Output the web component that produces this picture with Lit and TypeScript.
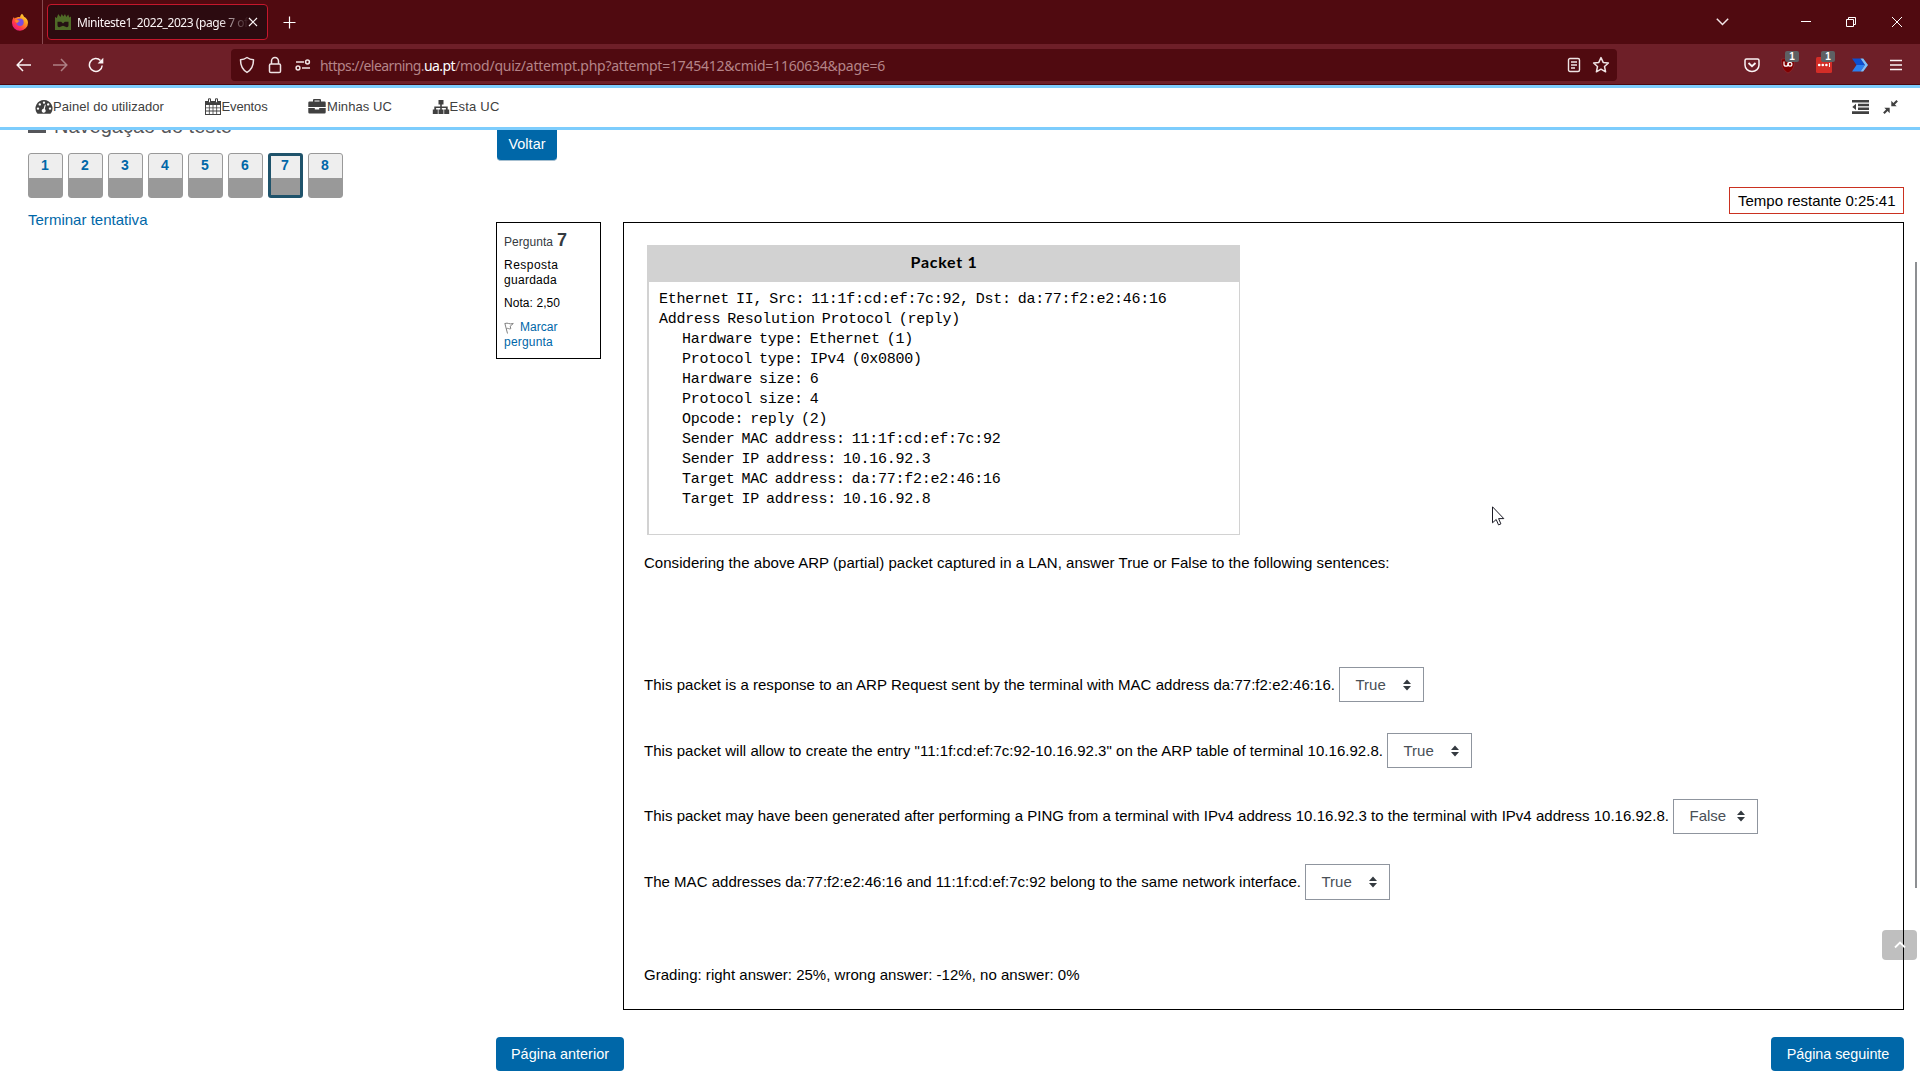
import { LitElement, html, svg, css } from "lit";
import { customElement, property } from "lit/decorators.js";
import { classMap } from "lit/directives/class-map.js";

/** A run of text tracked out (or in) so that it fills a given width. */
@customElement("fit-text")
class FitText extends LitElement {
  static styles = css`
    :host { display: inline-block; white-space: pre; }
  `;
  @property() text = "";
  @property({ type: Number }) w = 0;

  render() {
    return html`<span>${this.text}</span>`;
  }

  updated() {
    const span = this.renderRoot.querySelector("span") as HTMLElement;
    span.style.letterSpacing = "0px";
    const natural = span.getBoundingClientRect().width;
    span.style.letterSpacing = `${(this.w - natural) / this.text.length}px`;
  }
}

@customElement("browser-chrome")
class BrowserChrome extends LitElement {
  static styles = css`
    :host { display: block; height: 85px; font-family: "Noto Sans", "Open Sans", sans-serif; color: #fbf4f5; }
    svg { display: block; flex: none; }
    .tabs { display: flex; height: 44px; align-items: center; background: #500a10; }
    .pin { display: flex; width: 42px; justify-content: center; padding-right: 2px; box-sizing: border-box; }
    .sep { width: 1px; height: 44px; background: #884a50; }
    .tab { display: flex; align-items: center; box-sizing: border-box; width: 221px; height: 36px; margin-left: 4px;
      padding: 0 9px 0 7px; background: #2c0b10; border: 1px solid #c5172c; border-radius: 4px; }
    .title { flex: 1; margin-left: 6px; overflow: hidden; font-size: 12px; line-height: 18px; height: 18px; white-space: nowrap; padding-top: 1px;
      -webkit-mask-image: linear-gradient(90deg, #000 142px, transparent 172px); mask-image: linear-gradient(90deg, #000 142px, transparent 172px); }
    .plus { margin-left: 15px; }
    .win { display: flex; margin-left: auto; align-items: center; padding-right: 17px; }
    .win svg:nth-child(2) { margin-left: 72px; }
    .win svg:nth-child(3) { margin-left: 34px; }
    .win svg:nth-child(4) { margin-left: 34px; }
    .bar { display: flex; box-sizing: border-box; height: 41px; padding-top: 1px; align-items: center; background: #6e1f28; border-bottom: 1px solid #4b0a12; }
    .back { margin-left: 16px; }
    .fwd { margin-left: 20px; opacity: .45; }
    .reload { margin-left: 20px; }
    .url { display: flex; align-items: center; box-sizing: border-box; width: 1386px; height: 32px; margin-left: 127px;
      padding: 0 7px 0 7px; background: #500a10; border-radius: 4px; color: #b58488; }
    .ident { display: flex; gap: 10px; }
    .addr { display: flex; margin-left: 8px; padding-top: 2px; font-size: 14px; line-height: 20px; }
    .host { color: #fff; }
    .grow { flex: 1; }
    .star { margin-left: 11px; }
    .ext { display: flex; align-items: center; margin-left: 126px; }
    .slot { position: relative; width: 18px; height: 18px; margin-right: 18px; }
    .slot:last-child { margin-right: 0; }
    .badge { position: absolute; left: 6px; top: -5px; width: 14px; height: 11px; border-radius: 2px; background: #5e6063;
      font: bold 10px/11px "Liberation Sans", sans-serif; text-align: center; color: #fff; }
  `;

  render() {
    return html`
      <div class="tabs">
        <div class="pin">
          <svg width="18" height="18" viewBox="0 0 18 18">
            <defs>
              <linearGradient id="fx" x1="1" y1="0" x2="0.2" y2="1">
                <stop offset="0" stop-color="#fff04a" /><stop offset=".4" stop-color="#ff9a1f" />
                <stop offset=".72" stop-color="#ff3b47" /><stop offset="1" stop-color="#e8118a" />
              </linearGradient>
            </defs>
            <path fill="url(#fx)" d="M11 .8c1 1 1.700 1.900 2 2.900 2.400 1.200 4 3.300 4 6A8 8 0 0 1 1 9.800C1 7 1.800 5.300 3 3.900l.4 1.600c.8-.8 1.700-1.100 2.600-1.100C7 3.800 8 3.900 9 4.200 9.200 2.800 10 1.600 11 .8z" />
            <circle cx="9" cy="9.300" r="3.700" fill="#7a4be0" />
            <path fill="#ff8a26" d="M4 7.600c1.500-.8 3.300-.6 4.800.6-1.200 0-2.100.7-2.300 1.900-1.400-.2-2.300-1.200-2.500-2.500z" />
          </svg>
        </div>
        <div class="sep"></div>
        <div class="tab">
          <svg width="16" height="16" viewBox="0 0 16 16">
            <path fill="#4f6a27" d="M0 3l1.800 1L3.200 0l2.200 3L6.800 0 8.300 2.500 10 0l1.300 3L13.200 .6l1.200 3L16 2.500V16H0z" />
            <path fill="#241013" d="M2.500 7.800h3.700L8 9.600l1.800-1.800h3.700v3.700q0 1.800-1.700 1.800L8 11.800l-3.800 1.500Q2.500 13.300 2.500 11.500z" />
          </svg>
          <div class="title"><fit-text w="180" text="Miniteste1_2022_2023 (page 7 of 8"></fit-text></div>
          <svg width="10" height="10" viewBox="0 0 10 10" stroke="#fbf4f5" stroke-width="1.200"><path d="M1 1l8 8M9 1L1 9" /></svg>
        </div>
        <svg class="plus" width="13" height="13" viewBox="0 0 13 13" stroke="#fff" stroke-width="1.200"><path d="M6.500 .5v12M.5 6.500h12" /></svg>
        <div class="win">
          <svg width="13" height="8" viewBox="0 0 13 8" fill="none" stroke="#f3e6e8" stroke-width="1.500"><path d="M.8 .8l5.700 5.700L12.200 .8" /></svg>
          <svg width="10" height="10" viewBox="0 0 10 10" stroke="#fff"><path d="M0 4.500h10" /></svg>
          <svg width="12" height="12" viewBox="0 0 12 12" fill="none" stroke="#fff"><path d="M1.500 3.500h7v7h-7z M3.500 3.500v-2h7v7h-2" /></svg>
          <svg width="12" height="12" viewBox="0 0 12 12" stroke="#fff"><path d="M1 1l10 10M11 1L1 11" /></svg>
        </div>
      </div>
      <div class="bar">
        <svg class="back" width="16" height="14" viewBox="0 0 16 14" fill="none" stroke="#fbf4f5" stroke-width="1.500"><path d="M15 7H1.500M7 1L1.200 7 7 13" /></svg>
        <svg class="fwd" width="16" height="14" viewBox="0 0 16 14" fill="none" stroke="#fbf4f5" stroke-width="1.500"><path d="M1 7h13.500M9 1l5.800 6L9 13" /></svg>
        <svg class="reload" width="16" height="16" viewBox="0 0 16 16" fill="none" stroke="#fbf4f5" stroke-width="1.500"><path d="M14.200 8.500A6.400 6.400 0 1 1 12.500 3.600" /><path fill="#fbf4f5" stroke="none" d="M15.300 .8v5.700H9.600z" /></svg>
        <div class="url">
          <div class="ident">
            <svg width="18" height="18" viewBox="0 0 18 18" fill="none" stroke="#efe3e4" stroke-width="1.500"><path d="M9 1.500c2 1.500 4.200 2.200 6.500 2.300 0 5.200-1.800 9.900-6.500 12.600C4.300 13.700 2.500 9 2.500 3.800 4.800 3.700 7 3 9 1.500z" stroke-linejoin="round" /></svg>
            <svg width="18" height="18" viewBox="0 0 18 18" fill="none" stroke="#efe3e4" stroke-width="1.500"><rect x="3.500" y="8" width="11" height="8.500" rx="1.300" /><path d="M5.500 8V5a3.500 3.500 0 0 1 7 0v3" /></svg>
            <svg width="18" height="18" viewBox="0 0 18 18" fill="none" stroke="#efe3e4" stroke-width="1.500"><path d="M2 6h8M8 12h8" /><circle cx="13.500" cy="6" r="1.900" /><circle cx="4" cy="12" r="1.900" /></svg>
          </div>
          <div class="addr">
            <fit-text w="104" text="https://elearning."></fit-text><fit-text class="host" w="31" text="ua.pt"></fit-text><fit-text w="430" text="/mod/quiz/attempt.php?attempt=1745412&cmid=1160634&page=6"></fit-text>
          </div>
          <div class="grow"></div>
          <svg width="14" height="16" viewBox="0 0 14 16" fill="none" stroke="#efe3e4" stroke-width="1.400"><rect x="1.500" y="1.500" width="11" height="13" rx="1.500" /><path d="M4 5h6M4 8h6M4 11h4" /></svg>
          <svg class="star" width="18" height="18" viewBox="0 0 18 18" fill="none" stroke="#efe3e4" stroke-width="1.500" stroke-linejoin="round"><path d="M9 1.600l2.200 4.800 5.200.6-3.900 3.500 1.100 5.300L9 13.200l-4.600 2.600 1.100-5.300L1.600 7l5.200-.6z" /></svg>
        </div>
        <div class="ext">
          <div class="slot"><svg width="18" height="18" viewBox="0 0 18 18" fill="none" stroke="#fbf4f5" stroke-width="1.500"><path d="M3.500 3h11q1.500 0 1.500 1.500V9A7 6.500 0 0 1 2 9V4.500Q2 3 3.500 3z" /><path stroke-width="1.800" d="M5.500 7L9 10.200 12.500 7" /></svg></div>
          <div class="slot"><svg width="18" height="18" viewBox="0 0 18 18"><path fill="#800000" stroke="#94323a" stroke-width=".6" d="M9 1c2 1.300 4 2 6.500 2.200C15.500 10 14.500 14 9 17 3.500 14 2.500 10 2.500 3.200 5 3 7 2.300 9 1z" /><path fill="none" stroke="#fff" stroke-width="1.200" d="M5 5.500v2.700q0 2 2 2t2-2V6.500" /><circle cx="11" cy="8.200" r="1.900" fill="none" stroke="#fff" stroke-width="1.200" /></svg><span class="badge">1</span></div>
          <div class="slot"><svg width="18" height="18" viewBox="0 0 18 18"><rect x="1" y="1" width="16" height="16" rx="1.500" fill="#d32d27" /><g fill="#fff"><circle cx="4.200" cy="9" r="1.300" /><circle cx="7.800" cy="9" r="1.300" /><circle cx="11.400" cy="9" r="1.300" /><path d="M14 7h.9v4H14z" /></g></svg><span class="badge">1</span></div>
          <div class="slot"><svg width="18" height="18" viewBox="0 0 18 18"><path fill="#0d4fd0" d="M1 2.500h8.500L14 9H5.500z" /><path fill="#2a80f0" d="M5.500 9H14l-4.500 6.500H1z" /><path fill="#7cc0ff" d="M9.500 2.500h2.700L17 9l-4.800 6.500H9.500L14 9z" /></svg></div>
          <div class="slot"><svg width="18" height="18" viewBox="0 0 18 18" stroke="#fbf4f5" stroke-width="1.500"><path d="M3 4.500h12M3 9h12M3 13.500h12" /></svg></div>
        </div>
      </div>
    `;
  }
}

const gauge = svg`<path fill="#404040" fill-rule="evenodd" d="M9 2a8.500 8.500 0 0 0-7 13.300q.3.400.8.400h12.400q.5 0 .8-.4A8.500 8.500 0 0 0 9 2zM9 3.400a1.200 1.200 0 1 1 0 2.400 1.200 1.200 0 0 1 0-2.400zM4.800 5.200a1.200 1.200 0 1 1 0 2.400 1.200 1.200 0 0 1 0-2.400zM13.200 5.200a1.200 1.200 0 1 1 0 2.400 1.200 1.200 0 0 1 0-2.400zM3 9.400a1.200 1.200 0 1 1 0 2.400 1.200 1.200 0 0 1 0-2.400zM15 9.400a1.200 1.200 0 1 1 0 2.400 1.200 1.200 0 0 1 0-2.400zM9.900 6.500l.9.300-1 4.300a2 2 0 1 1-1.200-.3z" />`;
const calendar = svg`<path fill="#404040" d="M1 3h16v14H1z" /><path fill="#fff" d="M2 7h2.900v2.400H2zM5.700 7h2.900v2.400H5.700zM9.400 7h2.900v2.400H9.400zM13.100 7H16v2.400h-2.900zM2 10.200h2.900v2.400H2zM5.700 10.200h2.900v2.400H5.700zM9.400 10.200h2.900v2.400H9.400zM13.100 10.200H16v2.400h-2.900zM2 13.400h2.900V16H2zM5.700 13.400h2.900V16H5.700zM9.400 13.400h2.900V16H9.400zM13.100 13.400H16V16h-2.900z" /><path fill="#fff" stroke="#404040" d="M4.500 .8h2v4h-2zM11.500 .8h2v4h-2z" />`;
const briefcase = svg`<path fill="#404040" fill-rule="evenodd" d="M6 1h6q1 0 1 1v1.500h3.500q1.200 0 1.200 1.200v4.200H.3V4.700q0-1.200 1.200-1.200H5V2q0-1 1-1zM6.500 2.400v1.100h5V2.400zM.3 10h6.500v1.500h4.400V10h6.500v4.300q0 1.200-1.200 1.200h-15q-1.200 0-1.200-1.200z" />`;
const sitemap = svg`<path fill="#404040" d="M6.500 2h5v4.500H9.800v2h5.900v3h1.500V16h-5v-4.500h1.700v-1.500H9.800v1.500h1.700V16h-5v-4.500h1.700v-1.500H4.100v1.500h1.700V16h-5v-4.500h1.500v-3h5.900v-2H6.500z" />`;

interface NavItem { icon: unknown; label: string; width: number }
const NAV: NavItem[] = [
  { icon: gauge, label: "Painel do utilizador", width: 111 },
  { icon: calendar, label: "Eventos", width: 46 },
  { icon: briefcase, label: "Minhas UC", width: 65 },
  { icon: sitemap, label: "Esta UC", width: 50 },
];

@customElement("site-nav")
class SiteNav extends LitElement {
  static styles = css`
    :host { display: flex; box-sizing: border-box; height: 45px; align-items: center; padding: 0 21px 2px 35px;
      background: #fff; border-top: 3px solid #7dcdfd; border-bottom: 3px solid #7dcdfd;
      font: 13px/20px "Liberation Sans", Arial, sans-serif; color: #404040; }
    svg { display: block; flex: none; }
    .item { display: flex; align-items: center; margin-right: 39.5px; }
    .item:nth-child(2) { margin-right: 40.5px; }
    .item:nth-child(3) { gap: 1px; }
    .tools { display: flex; margin-left: auto; gap: 13px; }
  `;
  render() {
    return html`
      ${NAV.map((n) => html`<div class="item"><svg width="18" height="18" viewBox="0 0 18 18">${n.icon}</svg><fit-text w=${n.width} text=${n.label}></fit-text></div>`)}
      <div class="tools">
        <svg width="18" height="16" viewBox="0 0 18 16" fill="#404040"><path d="M1 1h17v2.500H1zM7 4.700h11v2.500H7zM7 8.500h11v2.500H7zM1 12.300h17V15H1zM5 4.700v6.300L1.300 7.900z" /></svg>
        <svg width="17" height="16" viewBox="0 0 17 16" fill="#404040"><path d="M9.300 1.800v5.400h5.400l-1.800-1.800 3-3-1.500-1.500-3 3zM7.700 14.200V8.800H2.300l1.800 1.800-3 3 1.500 1.500 3-3z" /></svg>
      </div>
    `;
  }
}

const PACKET: { text: string; nested?: boolean }[] = [
  { text: "Ethernet II, Src: 11:1f:cd:ef:7c:92, Dst: da:77:f2:e2:46:16" },
  { text: "Address Resolution Protocol (reply)" },
  { text: "Hardware type: Ethernet (1)", nested: true },
  { text: "Protocol type: IPv4 (0x0800)", nested: true },
  { text: "Hardware size: 6", nested: true },
  { text: "Protocol size: 4", nested: true },
  { text: "Opcode: reply (2)", nested: true },
  { text: "Sender MAC address: 11:1f:cd:ef:7c:92", nested: true },
  { text: "Sender IP address: 10.16.92.3", nested: true },
  { text: "Target MAC address: da:77:f2:e2:46:16", nested: true },
  { text: "Target IP address: 10.16.92.8", nested: true },
];

const ANSWERS = [
  { text: "This packet is a response to an ARP Request sent by the terminal with MAC address da:77:f2:e2:46:16.", width: 691, value: "True" },
  { text: "This packet will allow to create the entry \"11:1f:cd:ef:7c:92-10.16.92.3\" on the ARP table of terminal 10.16.92.8.", width: 739, value: "True" },
  { text: "This packet may have been generated after performing a PING from a terminal with IPv4 address 10.16.92.3 to the terminal with IPv4 address 10.16.92.8.", width: 1025, value: "False" },
  { text: "The MAC addresses da:77:f2:e2:46:16 and 11:1f:cd:ef:7c:92 belong to the same network interface.", width: 657, value: "True" },
];

@customElement("app-root")
class AppRoot extends LitElement {
  static styles = css`
    :host { display: block; position: relative; width: 1920px; height: 1080px; overflow: hidden; background: #fff;
      font: 15px/22px "Liberation Sans", Arial, sans-serif; color: #000; }
    svg { display: block; flex: none; }
    .page { display: flex; height: 950px; overflow: hidden; }
    .side { width: 468px; padding-left: 28px; }
    .heading { display: flex; align-items: flex-end; gap: 8px; height: 22px; margin-top: -14px; font-size: 20px; line-height: 24px; color: #55565a; }
    .bars { width: 18px; height: 14px; margin-bottom: 5px; border-top: 3px solid #55565a; border-bottom: 3px solid #55565a; box-sizing: border-box; }
    .quiz { display: flex; gap: 5px; margin-top: 15px; }
    .q { box-sizing: border-box; width: 35px; height: 45px; border: 1px solid #999; border-radius: 3px;
      background: linear-gradient(#eee 24px, #999 24px); text-align: center; font-weight: bold; font-size: 14px; line-height: 23px; color: #0067a8; padding-right: 1px; }
    .q.now { border: 3px solid #1f536b; line-height: 19px; background: linear-gradient(#eee 22px, #999 22px); }
    .end { display: block; margin-top: 11px; color: #0067a8; }
    .main { width: 1408px; }
    .btn { display: flex; align-items: center; justify-content: center; box-sizing: border-box; height: 34px; border-radius: 4px;
      background: #0067a8; color: #fff; font-size: 14.4px; }
    .voltar { width: 60px; height: 35px; margin: -4px 0 0 1px; padding-top: 1px; border-bottom: 1px solid #a6bfd0; }
    .timer { box-sizing: border-box; width: 175px; height: 27px; margin: 26px 0 0 auto; padding: 2px 0 0 8px; border: 1px solid #ca3120; line-height: 22px; }
    .row { display: flex; align-items: flex-start; justify-content: space-between; margin-top: 8px; }
    .info { box-sizing: border-box; width: 105px; height: 137px; padding: 7px 7px 0; border: 1px solid #000; font-size: 12px; line-height: 15px; }
    .no { display: flex; align-items: baseline; gap: 4px; height: 20px; line-height: 20px; color: #343a40; }
    .no b { font-size: 18px; }
    .state { margin-top: 8px; }
    .note { margin-top: 8px; }
    .flag { display: flex; align-items: center; gap: 6px; margin-top: 9px; color: #0067a8; }
    .flag2 { color: #0067a8; }
    .question { box-sizing: border-box; width: 1281px; height: 788px; padding: 22px 20px; border: 1px solid #000; }
    .packet { box-sizing: border-box; width: 593px; height: 290px; margin-left: 3px; border: 1px solid #d2d2d2; border-left-width: 2px; color: #000; }
    .ptitle { height: 36px; background: #d2d2d2; text-align: center; font: bold 16px/32px Lato, sans-serif; }
    .lines { padding: 8px 0 0 10px; font: 15px/20px "Liberation Mono", monospace; letter-spacing: -.25px; word-spacing: -1.750px; }
    .line { white-space: pre; height: 20px; }
    .line.nested { padding-left: 23px; }
    .intro { margin-top: 17px; }
    .answers { display: flex; flex-direction: column; gap: 30.4px; margin-top: 93.2px; }
    .answer { display: flex; align-items: center; gap: 4px; height: 35.300px; }
    .select { display: flex; align-items: center; justify-content: space-between; box-sizing: border-box; width: 85px; height: 100%;
      padding: 0 12px 0 15.5px; border: 1px solid #8f959e; color: #495057; }
    .grade { margin-top: 64px; }
    .pager { display: flex; justify-content: space-between; margin-top: 27px; }
    .prev { width: 128px; }
    .next { width: 133px; padding-left: 1px; }
    .thumb { position: absolute; left: 1915px; top: 262px; width: 2px; height: 626px; background: #8d8f92; }
    .top { position: absolute; left: 1882px; top: 930px; width: 35px; height: 30px; border-radius: 4px; background: rgba(0, 0, 0, .25); }
    .cursor { position: absolute; left: 1492px; top: 506px; }
  `;

  render() {
    return html`
      <browser-chrome></browser-chrome>
      <site-nav></site-nav>
      <div class="page">
        <div class="side">
          <div class="heading"><div class="bars"></div><fit-text w="178" text="Navegação do teste"></fit-text></div>
          <div class="quiz">
            ${[1, 2, 3, 4, 5, 6, 7, 8].map((n) => html`<div class=${classMap({ q: true, now: n === 7 })}>${n}</div>`)}
          </div>
          <fit-text class="end" w="119.500" text="Terminar tentativa"></fit-text>
        </div>
        <div class="main">
          <div class="btn voltar"><fit-text w="37" text="Voltar"></fit-text></div>
          <div class="timer"><fit-text w="157.500" text="Tempo restante 0:25:41"></fit-text></div>
          <div class="row">
            <div class="info">
              <div class="no"><fit-text w="49" text="Pergunta"></fit-text><b>7</b></div>
              <div class="state"><fit-text w="54.500" text="Resposta"></fit-text><br /><fit-text w="53" text="guardada"></fit-text></div>
              <div class="note"><fit-text w="56" text="Nota: 2,50"></fit-text></div>
              <div class="flag"><svg width="10" height="12" viewBox="0 0 10 12" fill="none" stroke="#808080"><path d="M.8 1.200L3.500 11.500M1 1.500c3-1.300 4 1.300 8.300 0L6.200 4.200l.6 2.500C5 7.500 4 5.500 2.300 6.800" /></svg><fit-text w="37.500" text="Marcar"></fit-text></div>
              <div class="flag2"><fit-text w="49" text="pergunta"></fit-text></div>
            </div>
            <div class="question">
              <div class="packet">
                <div class="ptitle"><fit-text w="67" text="Packet 1"></fit-text></div>
                <div class="lines">${PACKET.map((l) => html`<div class=${classMap({ line: true, nested: !!l.nested })}>${l.text}</div>`)}</div>
              </div>
              <div class="intro"><fit-text w="745.500" text="Considering the above ARP (partial) packet captured in a LAN, answer True or False to the following sentences:"></fit-text></div>
              <div class="answers">
                ${ANSWERS.map((a) => html`
                  <div class="answer">
                    <fit-text w=${a.width} text=${a.text}></fit-text>
                    <div class="select"><span>${a.value}</span><svg width="8" height="12" viewBox="0 0 8 12" fill="#343a40"><path d="M4 .5L8 5H0zM4 11.500L8 7H0z" /></svg></div>
                  </div>`)}
              </div>
              <div class="grade"><fit-text w="435.500" text="Grading: right answer: 25%, wrong answer: -12%, no answer: 0%"></fit-text></div>
            </div>
          </div>
          <div class="pager">
            <div class="btn prev"><fit-text w="98" text="Página anterior"></fit-text></div>
            <div class="btn next"><fit-text w="102.500" text="Página seguinte"></fit-text></div>
          </div>
        </div>
      </div>
      <div class="thumb"></div>
      <div class="top"><svg width="35" height="30" viewBox="0 0 35 30" fill="none" stroke="#fff" stroke-width="1.800"><path d="M13 17.500l5-5 5 5" /></svg></div>
      <svg class="cursor" width="13" height="20" viewBox="0 0 13 20" fill="#fff" stroke="#1b1b25"><path d="M.5 .8v16l3.700-3.300 2.300 5.400 2.400-1-2.300-5.300h5.200z" /></svg>
    `;
  }
}
